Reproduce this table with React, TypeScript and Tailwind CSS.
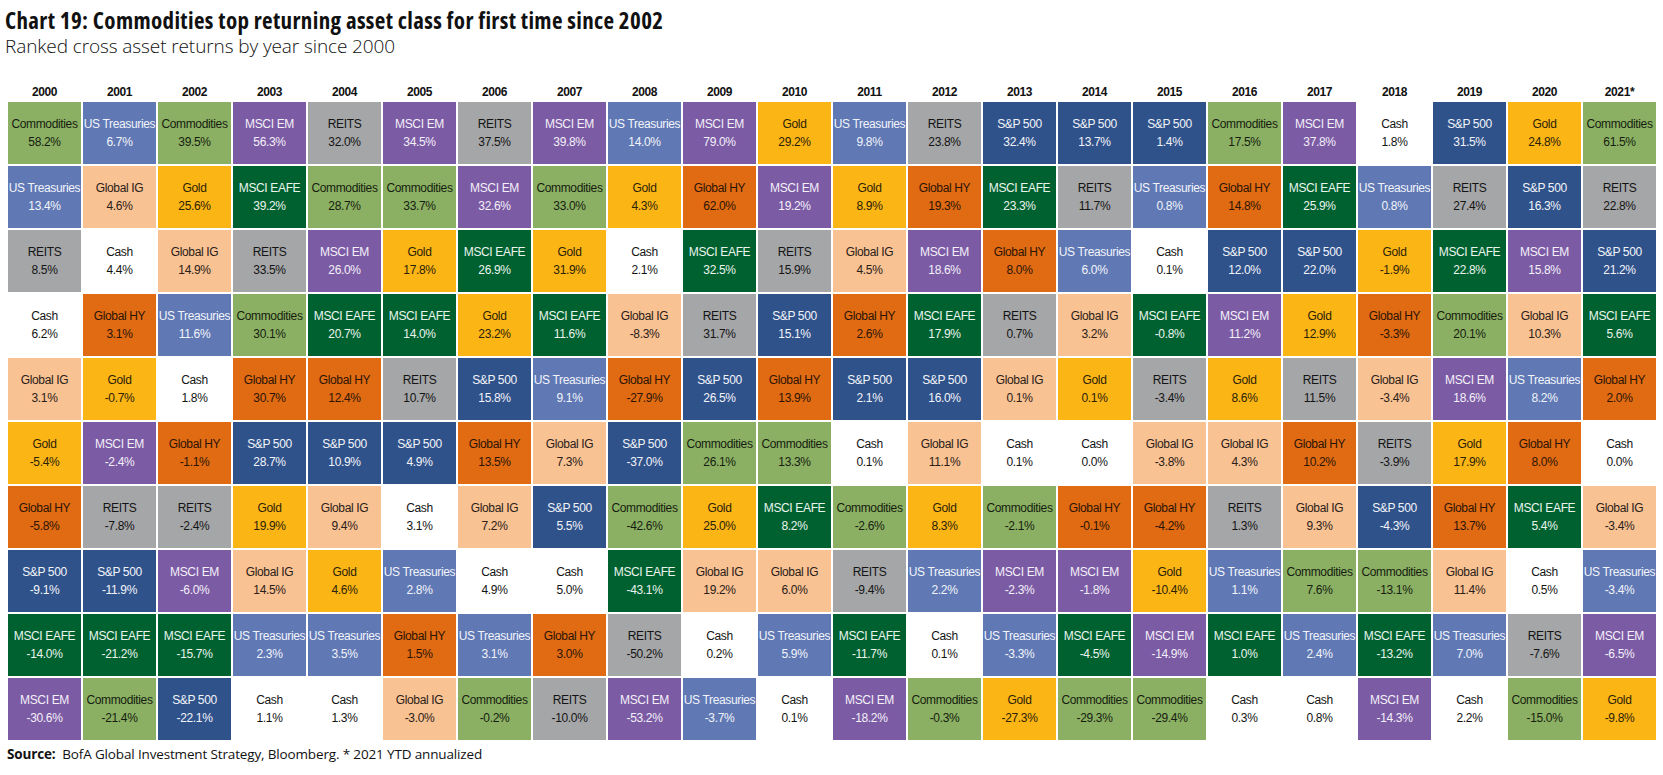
import React from "react";

// Ranked cross asset returns, one column per year (best to worst)
const palette: Record<string, string> = {
    "Commodities": "bg-[#8bb063] text-[#161d10]",
    "US Treasuries": "bg-[#6079b5] text-[#f2f4fa]",
    "REITS": "bg-[#a5a6a8] text-[#141414]",
    "Cash": "bg-white text-[#141414]",
    "Global IG": "bg-[#f8c293] text-[#2b2018]",
    "Gold": "bg-[#fbb515] text-[#2b2108]",
    "Global HY": "bg-[#e06b12] text-[#2b1406]",
    "S&P 500": "bg-[#30528a] text-[#f2f4fa]",
    "MSCI EAFE": "bg-[#006130] text-[#eaf5ee]",
    "MSCI EM": "bg-[#7b5ba4] text-[#f4f0f9]",
};

const years: [string, string][][] = [
    [["Commodities", "58.2"], ["US Treasuries", "13.4"], ["REITS", "8.5"], ["Cash", "6.2"], ["Global IG", "3.1"], ["Gold", "-5.4"], ["Global HY", "-5.8"], ["S&P 500", "-9.1"], ["MSCI EAFE", "-14.0"], ["MSCI EM", "-30.6"]],
    [["US Treasuries", "6.7"], ["Global IG", "4.6"], ["Cash", "4.4"], ["Global HY", "3.1"], ["Gold", "-0.7"], ["MSCI EM", "-2.4"], ["REITS", "-7.8"], ["S&P 500", "-11.9"], ["MSCI EAFE", "-21.2"], ["Commodities", "-21.4"]],
    [["Commodities", "39.5"], ["Gold", "25.6"], ["Global IG", "14.9"], ["US Treasuries", "11.6"], ["Cash", "1.8"], ["Global HY", "-1.1"], ["REITS", "-2.4"], ["MSCI EM", "-6.0"], ["MSCI EAFE", "-15.7"], ["S&P 500", "-22.1"]],
    [["MSCI EM", "56.3"], ["MSCI EAFE", "39.2"], ["REITS", "33.5"], ["Commodities", "30.1"], ["Global HY", "30.7"], ["S&P 500", "28.7"], ["Gold", "19.9"], ["Global IG", "14.5"], ["US Treasuries", "2.3"], ["Cash", "1.1"]],
    [["REITS", "32.0"], ["Commodities", "28.7"], ["MSCI EM", "26.0"], ["MSCI EAFE", "20.7"], ["Global HY", "12.4"], ["S&P 500", "10.9"], ["Global IG", "9.4"], ["Gold", "4.6"], ["US Treasuries", "3.5"], ["Cash", "1.3"]],
    [["MSCI EM", "34.5"], ["Commodities", "33.7"], ["Gold", "17.8"], ["MSCI EAFE", "14.0"], ["REITS", "10.7"], ["S&P 500", "4.9"], ["Cash", "3.1"], ["US Treasuries", "2.8"], ["Global HY", "1.5"], ["Global IG", "-3.0"]],
    [["REITS", "37.5"], ["MSCI EM", "32.6"], ["MSCI EAFE", "26.9"], ["Gold", "23.2"], ["S&P 500", "15.8"], ["Global HY", "13.5"], ["Global IG", "7.2"], ["Cash", "4.9"], ["US Treasuries", "3.1"], ["Commodities", "-0.2"]],
    [["MSCI EM", "39.8"], ["Commodities", "33.0"], ["Gold", "31.9"], ["MSCI EAFE", "11.6"], ["US Treasuries", "9.1"], ["Global IG", "7.3"], ["S&P 500", "5.5"], ["Cash", "5.0"], ["Global HY", "3.0"], ["REITS", "-10.0"]],
    [["US Treasuries", "14.0"], ["Gold", "4.3"], ["Cash", "2.1"], ["Global IG", "-8.3"], ["Global HY", "-27.9"], ["S&P 500", "-37.0"], ["Commodities", "-42.6"], ["MSCI EAFE", "-43.1"], ["REITS", "-50.2"], ["MSCI EM", "-53.2"]],
    [["MSCI EM", "79.0"], ["Global HY", "62.0"], ["MSCI EAFE", "32.5"], ["REITS", "31.7"], ["S&P 500", "26.5"], ["Commodities", "26.1"], ["Gold", "25.0"], ["Global IG", "19.2"], ["Cash", "0.2"], ["US Treasuries", "-3.7"]],
    [["Gold", "29.2"], ["MSCI EM", "19.2"], ["REITS", "15.9"], ["S&P 500", "15.1"], ["Global HY", "13.9"], ["Commodities", "13.3"], ["MSCI EAFE", "8.2"], ["Global IG", "6.0"], ["US Treasuries", "5.9"], ["Cash", "0.1"]],
    [["US Treasuries", "9.8"], ["Gold", "8.9"], ["Global IG", "4.5"], ["Global HY", "2.6"], ["S&P 500", "2.1"], ["Cash", "0.1"], ["Commodities", "-2.6"], ["REITS", "-9.4"], ["MSCI EAFE", "-11.7"], ["MSCI EM", "-18.2"]],
    [["REITS", "23.8"], ["Global HY", "19.3"], ["MSCI EM", "18.6"], ["MSCI EAFE", "17.9"], ["S&P 500", "16.0"], ["Global IG", "11.1"], ["Gold", "8.3"], ["US Treasuries", "2.2"], ["Cash", "0.1"], ["Commodities", "-0.3"]],
    [["S&P 500", "32.4"], ["MSCI EAFE", "23.3"], ["Global HY", "8.0"], ["REITS", "0.7"], ["Global IG", "0.1"], ["Cash", "0.1"], ["Commodities", "-2.1"], ["MSCI EM", "-2.3"], ["US Treasuries", "-3.3"], ["Gold", "-27.3"]],
    [["S&P 500", "13.7"], ["REITS", "11.7"], ["US Treasuries", "6.0"], ["Global IG", "3.2"], ["Gold", "0.1"], ["Cash", "0.0"], ["Global HY", "-0.1"], ["MSCI EM", "-1.8"], ["MSCI EAFE", "-4.5"], ["Commodities", "-29.3"]],
    [["S&P 500", "1.4"], ["US Treasuries", "0.8"], ["Cash", "0.1"], ["MSCI EAFE", "-0.8"], ["REITS", "-3.4"], ["Global IG", "-3.8"], ["Global HY", "-4.2"], ["Gold", "-10.4"], ["MSCI EM", "-14.9"], ["Commodities", "-29.4"]],
    [["Commodities", "17.5"], ["Global HY", "14.8"], ["S&P 500", "12.0"], ["MSCI EM", "11.2"], ["Gold", "8.6"], ["Global IG", "4.3"], ["REITS", "1.3"], ["US Treasuries", "1.1"], ["MSCI EAFE", "1.0"], ["Cash", "0.3"]],
    [["MSCI EM", "37.8"], ["MSCI EAFE", "25.9"], ["S&P 500", "22.0"], ["Gold", "12.9"], ["REITS", "11.5"], ["Global HY", "10.2"], ["Global IG", "9.3"], ["Commodities", "7.6"], ["US Treasuries", "2.4"], ["Cash", "0.8"]],
    [["Cash", "1.8"], ["US Treasuries", "0.8"], ["Gold", "-1.9"], ["Global HY", "-3.3"], ["Global IG", "-3.4"], ["REITS", "-3.9"], ["S&P 500", "-4.3"], ["Commodities", "-13.1"], ["MSCI EAFE", "-13.2"], ["MSCI EM", "-14.3"]],
    [["S&P 500", "31.5"], ["REITS", "27.4"], ["MSCI EAFE", "22.8"], ["Commodities", "20.1"], ["MSCI EM", "18.6"], ["Gold", "17.9"], ["Global HY", "13.7"], ["Global IG", "11.4"], ["US Treasuries", "7.0"], ["Cash", "2.2"]],
    [["Gold", "24.8"], ["S&P 500", "16.3"], ["MSCI EM", "15.8"], ["Global IG", "10.3"], ["US Treasuries", "8.2"], ["Global HY", "8.0"], ["MSCI EAFE", "5.4"], ["Cash", "0.5"], ["REITS", "-7.6"], ["Commodities", "-15.0"]],
    [["Commodities", "61.5"], ["REITS", "22.8"], ["S&P 500", "21.2"], ["MSCI EAFE", "5.6"], ["Global HY", "2.0"], ["Cash", "0.0"], ["Global IG", "-3.4"], ["US Treasuries", "-3.4"], ["MSCI EM", "-6.5"], ["Gold", "-9.8"]],
];

const yearLabels = [
    "2000", "2001", "2002", "2003", "2004", "2005", "2006", "2007", "2008", "2009", "2010",
    "2011", "2012", "2013", "2014", "2015", "2016", "2017", "2018", "2019", "2020", "2021*",
];

const arial = "font-['Liberation_Sans',Arial,sans-serif]";
const humanist = "font-['Open_Sans','Noto_Sans',sans-serif]";

function Cell({ asset, value }: { asset: string; value: string }) {
    return (
        <div className={`flex flex-col items-center justify-center text-[12px] leading-[18px] tracking-[-0.35px] whitespace-nowrap ${palette[asset]}`}>
            <span>{asset}</span>
            <span>{value}%</span>
        </div>
    );
}

export default function App() {
    return (
        <div className="w-[1663px] h-[775px] bg-white overflow-hidden pt-[7px]">
            <div className={`px-[5px] ${humanist} text-[#111]`}>
                <h1 className="text-[23px] leading-[27px] font-bold tracking-[0.35px] [font-stretch:75%]">
                    Chart 19: Commodities top returning asset class for first time since 2002
                </h1>
                <p className="text-[19px] leading-[24px] font-light tracking-[-0.1px] [font-stretch:96%]">
                    Ranked cross asset returns by year since 2000
                </p>
            </div>

            <div
                className={`ml-[8px] mt-[26px] grid grid-flow-col grid-cols-[repeat(22,73px)] grid-rows-[16px_repeat(10,62px)] gap-[2px] ${arial}`}
            >
                {years.map((col, i) => (
                    <React.Fragment key={yearLabels[i]}>
                        <div className="flex items-center justify-center text-[12px] font-bold tracking-[-0.4px] text-[#111] leading-none">
                            {yearLabels[i]}
                        </div>
                        {col.map(([asset, value]) => (
                            <Cell key={asset} asset={asset} value={value} />
                        ))}
                    </React.Fragment>
                ))}
            </div>

            <p className={`ml-[7px] mt-[4px] text-[13.5px] leading-[20px] tracking-[-0.15px] text-[#111] ${humanist} [font-stretch:97%]`}>
                <span className="font-bold">Source:</span>&nbsp; BofA Global Investment Strategy, Bloomberg. * 2021 YTD annualized
            </p>
        </div>
    );
}
